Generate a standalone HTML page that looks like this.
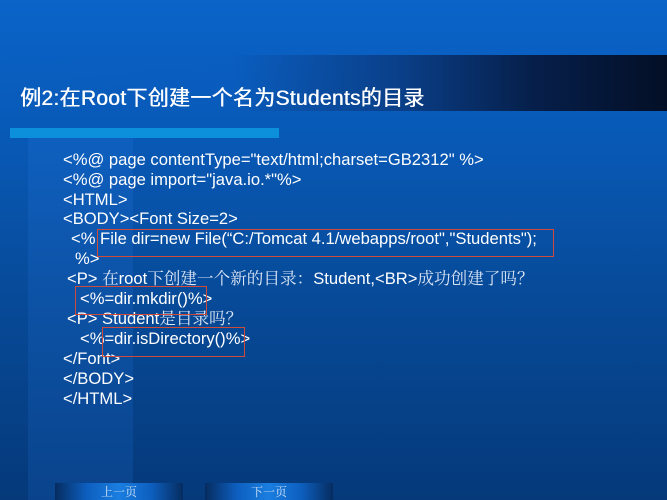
<!DOCTYPE html>
<html><head><meta charset="utf-8"><style>
html,body{margin:0;padding:0}
body{width:667px;height:500px;position:relative;overflow:hidden;
background:linear-gradient(180deg,#0a64c9 0%,#0858b4 30%,#074a98 60%,#05397a 100%);
font-family:"Liberation Sans","Noto Sans CJK SC",sans-serif;color:#fff}
.band{position:absolute;left:28px;top:130px;width:105px;height:370px;background:linear-gradient(180deg,rgba(30,110,210,0.3),rgba(20,90,180,0.3))}
.tb{position:absolute;left:0;top:55px;width:667px;height:56px;background:linear-gradient(90deg,rgba(10,100,200,0) 0%,rgba(10,90,190,0.3) 35%,#0a3f88 60%,#061f4a 80%,#030f26 100%)}
.title{position:absolute;left:20px;top:86px;font-size:21px;line-height:26px;font-family:"Liberation Sans","WenQuanYi Zen Hei",sans-serif;white-space:nowrap;letter-spacing:0.3px;text-shadow:0.5px 0 0 #fff}
.bar{position:absolute;left:10px;top:128px;width:269px;height:10px;background:#0c90dc}
.l{position:absolute;font-size:16.6px;line-height:20px;white-space:nowrap}
.l .c{font-family:"Liberation Serif","Noto Serif CJK SC",serif;color:#dde6f5}
.box{position:absolute;border:1.5px solid #d04a3a}
.btn{position:absolute;top:483px;width:128px;height:17px;background:linear-gradient(90deg,#062c60 0%,#0d5fbf 25%,#1a7ee0 50%,#0d5fbf 75%,#062c60 100%);font-family:"Noto Serif CJK SC",serif;font-size:12px;text-align:center;line-height:17px;color:#cfe0f5}
</style></head><body>
<div class="band"></div>
<div class="tb"></div>
<div class="title">例2:在Root下创建一个名为Students的目录</div>
<div class="bar"></div>
<div class="l" style="left:63px;top:150px">&lt;%@ page contentType="text/html;charset=GB2312" %&gt;</div>
<div class="l" style="left:63px;top:170px">&lt;%@ page import="java.io.*"%&gt;</div>
<div class="l" style="left:63px;top:190px">&lt;HTML&gt;</div>
<div class="l" style="left:63px;top:209px">&lt;BODY&gt;&lt;Font Size=2&gt;</div>
<div class="l" style="left:71px;top:229px">&lt;% File dir=new File(“C:/Tomcat 4.1/webapps/root","Students");</div>
<div class="l" style="left:75px;top:249px">%&gt;</div>
<div class="l" style="left:67px;top:269px">&lt;P&gt; <span class="c">在</span>root<span class="c">下创建一个新的目录：</span>Student,&lt;BR&gt;<span class="c">成功创建了吗？</span></div>
<div class="l" style="left:80px;top:289px">&lt;%=dir.mkdir()%&gt;</div>
<div class="l" style="left:67px;top:309px">&lt;P&gt; Student<span class="c">是目录吗？</span></div>
<div class="l" style="left:80px;top:329px">&lt;%=dir.isDirectory()%&gt;</div>
<div class="l" style="left:63px;top:349px">&lt;/Font&gt;</div>
<div class="l" style="left:63px;top:369px">&lt;/BODY&gt;</div>
<div class="l" style="left:63px;top:389px">&lt;/HTML&gt;</div>
<div class="box" style="left:97px;top:229px;width:455px;height:26px"></div>
<div class="box" style="left:75px;top:286px;width:130px;height:27px"></div>
<div class="box" style="left:102px;top:327px;width:141px;height:28px"></div>
<div class="btn" style="left:55px">上一页</div>
<div class="btn" style="left:205px">下一页</div>
</body></html>
